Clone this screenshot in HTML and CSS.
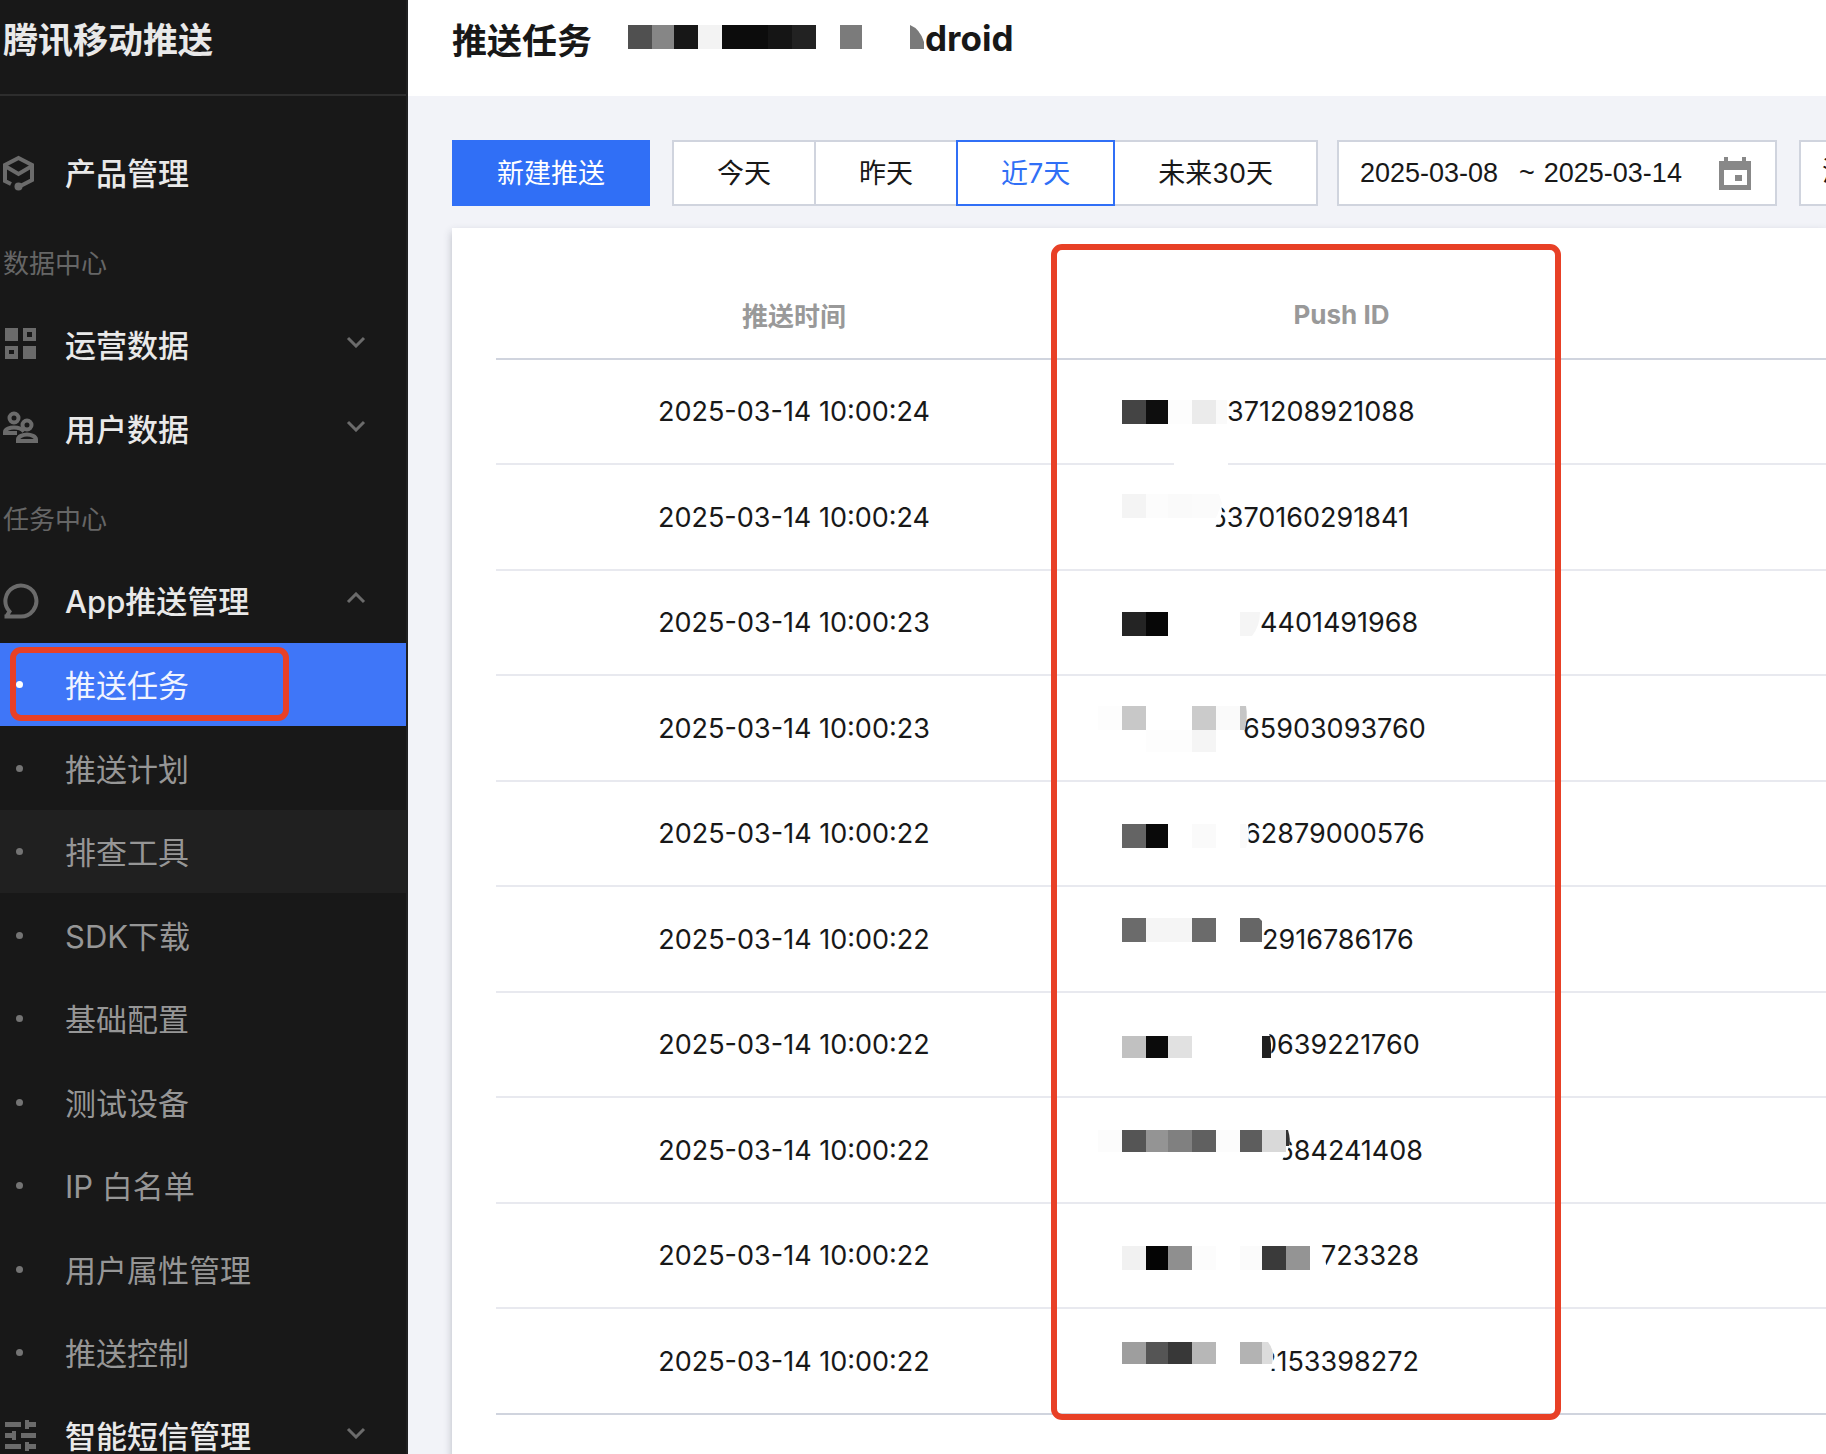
FILE: index.html
```html
<!DOCTYPE html>
<html lang="zh-CN">
<head>
  <meta charset="UTF-8">
  <meta name="viewport" content="width=device-width, initial-scale=1">
  <title>腾讯移动推送 - 推送任务</title>
  <link rel="stylesheet" href="styles.css">
</head>
<body>
  <aside class="sidebar">
    <div class="brand">腾讯移动推送</div>
    <nav class="menu">
      <a class="menu-item" href="#product">
        <svg class="icon" viewBox="0 0 36 36" fill="none" stroke="currentColor" stroke-width="4">
          <path d="M8 29L2 26V10L15.5 3L29 10V25L15.5 32"/>
          <path d="M2 11L15.5 19L29 11"/>
          <circle cx="15.5" cy="31.5" r="4" fill="currentColor" stroke="none"/>
        </svg>
        <span>产品管理</span>
      </a>

      <h2 class="menu-title">数据中心</h2>
      <a class="menu-item" href="#operation">
        <svg class="icon" viewBox="0 0 36 36" fill="currentColor" fill-rule="evenodd">
          <path d="M2 1h13v13H2zM20 1h13v13H20zM24 5v5h5V5zM2 19h13v13H2zM6 23v4h5v-4zM20 19h13v13H20z"/>
        </svg>
        <span>运营数据</span>
        <svg class="arrow" viewBox="0 0 20 12"><path d="M2 2l8 8 8-8"/></svg>
      </a>
      <a class="menu-item" href="#users">
        <svg class="icon" viewBox="0 0 36 36" fill="none" stroke="currentColor" stroke-width="4">
          <circle cx="11" cy="7" r="4.500"/>
          <circle cx="24" cy="14" r="4.500"/>
          <path d="M14 22H2V21c0-3 5-4.500 9-4.500 5 0 8 1.500 10 4"/>
          <path d="M15 30v-1.500c0-3 5-5 9-5s9 2 9 5V30z"/>
        </svg>
        <span>用户数据</span>
        <svg class="arrow" viewBox="0 0 20 12"><path d="M2 2l8 8 8-8"/></svg>
      </a>

      <h2 class="menu-title">任务中心</h2>
      <a class="menu-item" href="#app-push">
        <svg class="icon" viewBox="0 0 36 36" fill="none" stroke="currentColor" stroke-width="4">
          <path d="M3 34L6.500 28.500A15.500 15.500 0 1 1 18 33.500H1.500"/>
        </svg>
        <span>App推送管理</span>
        <svg class="arrow" viewBox="0 0 20 12"><path d="M2 10l8-8 8 8"/></svg>
      </a>
      <ul class="submenu">
        <li><a class="active" href="#task">推送任务</a><div class="mark mark-menu"></div></li>
        <li><a href="#plan">推送计划</a></li>
        <li><a class="hover" href="#tools">排查工具</a></li>
        <li><a href="#sdk">SDK下载</a></li>
        <li><a href="#config">基础配置</a></li>
        <li><a href="#device">测试设备</a></li>
        <li><a href="#ip">IP 白名单</a></li>
        <li><a href="#attr">用户属性管理</a></li>
        <li><a href="#control">推送控制</a></li>
      </ul>
      <a class="menu-item" href="#sms">
        <svg class="icon" viewBox="0 0 36 36" fill="currentColor">
          <path d="M2 4h16v5H2zM22 2h4v2h7v5h-7v2h-4zM2 15h7v-2h4v9H9v-2H2zM18 15h15v5H18zM2 26h16v5H2zM22 24h4v2h7v5h-7v2h-4z"/>
        </svg>
        <span>智能短信管理</span>
        <svg class="arrow" viewBox="0 0 20 12"><path d="M2 2l8 8 8-8"/></svg>
      </a>
    </nav>
  </aside>

  <main class="main">
    <header class="page-header">
      <h1>推送任务</h1>
      <div class="app-name">
        <svg class="mosaic" width="297" height="48" viewBox="0 0 297 48">
          <rect x="0" y="11" width="24" height="24" fill="#505050"/>
          <rect x="24" y="11" width="22" height="24" fill="#868686"/>
          <rect x="46" y="11" width="24" height="24" fill="#171717"/>
          <rect x="70" y="11" width="24" height="24" fill="#f3f3f3"/>
          <rect x="94" y="11" width="46" height="24" fill="#0c0c0c"/>
          <rect x="140" y="11" width="24" height="24" fill="#151515"/>
          <rect x="164" y="11" width="24" height="24" fill="#222"/>
          <rect x="212" y="11" width="22" height="24" fill="#7b7b7b"/>
          <path d="M282 11q10 4 14 17v7h-14z" fill="#7a7a7a"/>
        </svg>
        <span>droid</span>
      </div>
    </header>

    <div class="toolbar">
      <button class="btn-primary" type="button">新建推送</button>
      <div class="segment">
        <button type="button">今天</button>
        <button type="button">昨天</button>
        <button class="active" type="button">近7天</button>
        <button type="button">未来30天</button>
      </div>
      <div class="date-range">
        <input type="text" value="2025-03-08" aria-label="开始日期">
        <span>~</span>
        <input type="text" value="2025-03-14" aria-label="结束日期">
        <button type="button" aria-label="选择日期">
          <svg width="32" height="33" viewBox="0 0 32 33" fill="#888" fill-rule="evenodd">
            <path d="M0 4h5V0h4v4h14V0h4v4h5v29H0zM5 13v15h23V13zM16 18h7v6h-7z"/>
          </svg>
        </button>
      </div>
      <select class="type-select" aria-label="消息类型">
        <option>消息类型</option>
      </select>
    </div>

    <section class="card">
      <table class="task-table">
        <thead>
          <tr><th class="col-time">推送时间</th><th class="col-id">Push ID</th><th></th></tr>
        </thead>
        <tbody>
          <tr>
            <td>2025-03-14 10:00:24</td>
            <td><div class="push-id">
              <svg class="mosaic" width="105" height="48" viewBox="0 0 105 48">
                <rect x="0" y="12" width="24" height="24" fill="#444"/>
                <rect x="24" y="12" width="22" height="24" fill="#0e0e0e"/>
                <rect x="46" y="12" width="24" height="24" fill="#fdfdfd"/>
                <rect x="70" y="12" width="24" height="24" fill="#ebebeb"/>
                <rect x="94" y="12" width="11" height="24" fill="#fafafa"/>
                <rect x="52" y="75" width="54" height="4" fill="#fff"/>
              </svg>
              <span>371208921088</span>
            </div></td>
            <td></td>
          </tr>
          <tr>
            <td>2025-03-14 10:00:24</td>
            <td><div class="push-id">
              <svg class="mosaic" width="88" height="48" viewBox="0 0 88 48">
                <path d="M80 2h16q4 9 4 18-2 8-7 14l-2 12H80z" fill="#fff"/>
                <rect x="0" y="1" width="24" height="24" fill="#f4f4f4"/>
                <rect x="24" y="1" width="22" height="24" fill="#fcfcfc"/>
                <rect x="46" y="1" width="24" height="24" fill="#fafafa"/>
                <path d="M70 1h27l3 9-6 15H70z" fill="#fbfbfb"/>
              </svg>
              <span>6370160291841</span>
            </div></td>
            <td></td>
          </tr>
          <tr>
            <td>2025-03-14 10:00:23</td>
            <td><div class="push-id">
              <svg class="mosaic" width="138" height="48" viewBox="0 0 138 48">
                <rect x="0" y="13" width="24" height="24" fill="#242424"/>
                <rect x="24" y="13" width="22" height="24" fill="#070707"/>
                <path d="M118 13h20q0 14-8 24h-12z" fill="#f5f5f5"/>
              </svg>
              <span>4401491968</span>
            </div></td>
            <td></td>
          </tr>
          <tr>
            <td>2025-03-14 10:00:23</td>
            <td><div class="push-id">
              <svg class="mosaic" width="121" height="48" viewBox="0 0 121 48">
                <rect x="-24" y="2" width="24" height="24" fill="#fdfdfd"/>
                <rect x="0" y="2" width="24" height="24" fill="#c8c8c8"/>
                <rect x="70" y="2" width="24" height="24" fill="#cbcbcb"/>
                <rect x="94" y="2" width="24" height="24" fill="#fafafa"/>
                <path d="M118 2h6q2 10-1 24h-5z" fill="#c6c6c6"/>
                <rect x="24" y="26" width="46" height="22" fill="#fdfdfd"/>
                <rect x="70" y="26" width="24" height="22" fill="#f5f5f5"/>
              </svg>
              <span>65903093760</span>
            </div></td>
            <td></td>
          </tr>
          <tr>
            <td>2025-03-14 10:00:22</td>
            <td><div class="push-id">
              <svg class="mosaic" width="122" height="48" viewBox="0 0 122 48">
                <path d="M118 10h7q4 14 0 30h-7z" fill="#fff"/>
                <rect x="0" y="14" width="24" height="24" fill="#646464"/>
                <rect x="24" y="14" width="22" height="24" fill="#090909"/>
                <rect x="70" y="14" width="24" height="24" fill="#fafafa"/>
                <path d="M118 14h6q4 12 0 24h-6z" fill="#fafafa"/>
              </svg>
              <span>62879000576</span>
            </div></td>
            <td></td>
          </tr>
          <tr>
            <td>2025-03-14 10:00:22</td>
            <td><div class="push-id">
              <svg class="mosaic" width="140" height="48" viewBox="0 0 140 48">
                <path d="M118 3h19l3 3v21h-22z" fill="#666"/>
                <rect x="0" y="3" width="24" height="24" fill="#6b6b6b"/>
                <rect x="24" y="3" width="46" height="24" fill="#f5f5f5"/>
                <rect x="70" y="3" width="24" height="24" fill="#6b6b6b"/>
              </svg>
              <span>2916786176</span>
            </div></td>
            <td></td>
          </tr>
          <tr>
            <td>2025-03-14 10:00:22</td>
            <td><div class="push-id">
              <svg class="mosaic" width="138" height="48" viewBox="0 0 138 48">
                <path d="M136 10h10q6 14 2 30h-12z" fill="#fff"/>
                <rect x="0" y="15" width="24" height="22" fill="#c1c1c1"/>
                <rect x="24" y="15" width="22" height="22" fill="#0b0b0b"/>
                <rect x="46" y="15" width="24" height="22" fill="#e1e1e1"/>
                <path d="M140 15h8l1 8v14h-9z" fill="#202020"/>
              </svg>
              <span>0639221760</span>
            </div></td>
            <td></td>
          </tr>
          <tr>
            <td>2025-03-14 10:00:22</td>
            <td><div class="push-id">
              <svg class="mosaic" width="155" height="48" viewBox="0 0 155 48">
                <path d="M154 4h13q2 14-2 22-2 4-5 8v4h-6z" fill="#fff"/>
                <rect x="-24" y="4" width="24" height="22" fill="#fcfcfc"/>
                <rect x="0" y="4" width="24" height="22" fill="#555"/>
                <rect x="24" y="4" width="22" height="22" fill="#949494"/>
                <rect x="46" y="4" width="24" height="22" fill="#808080"/>
                <rect x="70" y="4" width="24" height="22" fill="#606060"/>
                <rect x="94" y="4" width="24" height="22" fill="#fcfcfc"/>
                <rect x="118" y="4" width="22" height="22" fill="#5d5d5d"/>
                <rect x="140" y="4" width="24" height="22" fill="#d9d9d9"/>
                <path d="M164 4h2q3 10 1 16h-3z" fill="#333"/>
              </svg>
              <span>684241408</span>
            </div></td>
            <td></td>
          </tr>
          <tr>
            <td>2025-03-14 10:00:22</td>
            <td><div class="push-id">
              <svg class="mosaic" width="199" height="48" viewBox="0 0 199 48">
                <rect x="0" y="14" width="24" height="24" fill="#f1f1f1"/>
                <rect x="24" y="14" width="22" height="24" fill="#040404"/>
                <rect x="46" y="14" width="24" height="24" fill="#8f8f8f"/>
                <rect x="70" y="14" width="24" height="24" fill="#fcfcfc"/>
                <rect x="118" y="14" width="22" height="24" fill="#fbfbfb"/>
                <rect x="140" y="14" width="24" height="24" fill="#3a3a3a"/>
                <rect x="164" y="14" width="24" height="24" fill="#949494"/>
                <path d="M196 18h6l3 21h-9z" fill="#fff"/>
              </svg>
              <span>723328</span>
            </div></td>
            <td></td>
          </tr>
          <tr>
            <td>2025-03-14 10:00:22</td>
            <td><div class="push-id">
              <svg class="mosaic" width="138" height="48" viewBox="0 0 138 48">
                <path d="M136 6h10q6 8 5 17l-2 15h-13z" fill="#fff"/>
                <rect x="0" y="5" width="24" height="22" fill="#9e9e9e"/>
                <rect x="24" y="5" width="22" height="22" fill="#555"/>
                <rect x="46" y="5" width="24" height="22" fill="#383838"/>
                <rect x="70" y="5" width="24" height="22" fill="#b7b7b7"/>
                <rect x="118" y="5" width="22" height="22" fill="#b3b3b3"/>
                <path d="M140 5h6q6 8 5 15l-1 7h-10z" fill="#dcdcdc"/>
              </svg>
              <span>2153398272</span>
            </div></td>
            <td></td>
          </tr>
        </tbody>
      </table>
      <div class="mark mark-column"></div>
    </section>
  </main>
</body>
</html>
```
FILE: styles.css
```css
/* Reset */
* { margin: 0; padding: 0; box-sizing: border-box; }
body {
  display: flex;
  height: 100vh;
  overflow: hidden;
  background: #f2f3f8;
  color: #181818;
  font-family: Inter, "Noto Sans CJK SC", sans-serif;
  font-size: 27px;
}
a { color: inherit; text-decoration: none; }
ul { list-style: none; }
button, input, select {
  font: inherit;
  color: inherit;
  border: 0;
  background: none;
}

/* Sidebar */
.sidebar {
  flex: 0 0 408px;
  border-right: 2px solid #202122;
  background: #181818;
  color: #e9e9e9;
  font-size: 31px;
  overflow: hidden;
}
.brand {
  height: 96px;
  padding-left: 3px;
  border-bottom: 2px solid #2d2d2d;
  font-size: 35px;
  font-weight: bold;
  line-height: 80px;
}
.menu { padding-top: 35px; }
.menu-item {
  display: flex;
  align-items: center;
  height: 84px;
  padding: 0 40px 0 3px;
  font-weight: 500;
}
.menu-item span { padding-bottom: 4px; }
.icon {
  flex: none;
  width: 36px;
  height: 36px;
  margin-right: 26px;
  color: #6b6b6b;
}
.arrow {
  width: 20px;
  height: 12px;
  margin: 0 0 6px auto;
  fill: none;
  stroke: #6b6b6b;
  stroke-width: 3;
}
.menu-title {
  padding: 10px 0 0 3px;
  color: #666;
  font-size: 26px;
  font-weight: normal;
  line-height: 78px;
}
.submenu { color: #969696; }
.submenu li { position: relative; }
.submenu a {
  display: flex;
  align-items: center;
  height: 84px;
  padding: 0 0 2px 16px;
}
.submenu li:nth-child(odd) a { height: 83px; }
.submenu a::before {
  content: "";
  width: 7px;
  height: 7px;
  margin: 2px 42px 0 0;
  border-radius: 50%;
  background: #747474;
}
.submenu a.hover { background: #202020; }
.submenu a.active {
  background: #3f76f8;
  color: #f0f4ff;
}
.submenu a.active::before { background: #fff; }

/* Red highlight frames */
.mark {
  position: absolute;
  border: 6px solid #e84026;
  border-radius: 11px;
  pointer-events: none;
}
.mark-menu {
  top: 4px;
  left: 10px;
  width: 279px;
  height: 74px;
}
.mark-column {
  top: 16px;
  bottom: 37px;
  left: 599px;
  width: 510px;
}

/* Main */
.main {
  flex: 1;
  min-width: 0;
  overflow: hidden;
}
.page-header {
  display: flex;
  align-items: center;
  gap: 36px;
  height: 96px;
  padding: 0 44px 20px;
  background: #fff;
  font-size: 35px;
  font-weight: bold;
}
.page-header h1 { font-size: 35px; }
.app-name { display: flex; align-items: center; }
.mosaic {
  position: relative;
  z-index: 1;
  flex: none;
  overflow: visible;
}

.toolbar {
  display: flex;
  height: 66px;
  margin: 44px 0 22px 44px;
}
.toolbar > * { flex: none; }
.btn-primary {
  margin-right: 22px;
  padding: 0 45px 4px;
  background: #306ff6;
  color: #fff;
}
.segment { display: flex; margin-right: 19px; }
.segment button {
  padding: 0 43px 4px;
  border: 2px solid #d0d4de;
  background: #fff;
}
.segment button + button { margin-left: -2px; }
.segment button.active {
  position: relative;
  border-color: #306ff6;
  color: #306ff6;
}
.date-range {
  display: flex;
  align-items: center;
  width: 440px;
  margin-right: 22px;
  padding: 0 24px 0 21px;
  border: 2px solid #d0d4de;
  background: #fff;
  font-family: "Liberation Sans", "Noto Sans CJK SC", sans-serif;
}
.date-range input { width: 140px; }
.date-range span { margin: 0 9px 0 19px; }
.date-range button { height: 33px; margin-left: auto; }
.date-range svg { display: block; }
.type-select {
  width: 220px;
  padding: 0 21px 4px;
  border: 2px solid #d0d4de;
  background: #fff;
  appearance: none;
}

/* Task table */
.card {
  position: relative;
  margin-left: 44px;
  padding: 44px 0 42px 44px;
  background: #fff;
  box-shadow: 0 4px 8px rgba(54, 58, 80, 0.3);
}
.task-table {
  width: 100%;
  border-spacing: 0;
  table-layout: fixed;
}
.col-time { width: 596px; }
.col-id { width: 499px; }
.task-table th {
  height: 88px;
  padding-bottom: 2px;
  border-bottom: 2px solid #d0d4de;
  color: #999;
  font-size: 26px;
}
.task-table td {
  height: 105px;
  border-bottom: 2px solid #e8e9ef;
  font-size: 27px;
  text-align: center;
}
.task-table tr:nth-child(even) td { height: 106px; }
.task-table tr:last-child td { border-color: #d0d4de; }
.push-id {
  display: flex;
  align-items: center;
  padding-left: 30px;
}
```
